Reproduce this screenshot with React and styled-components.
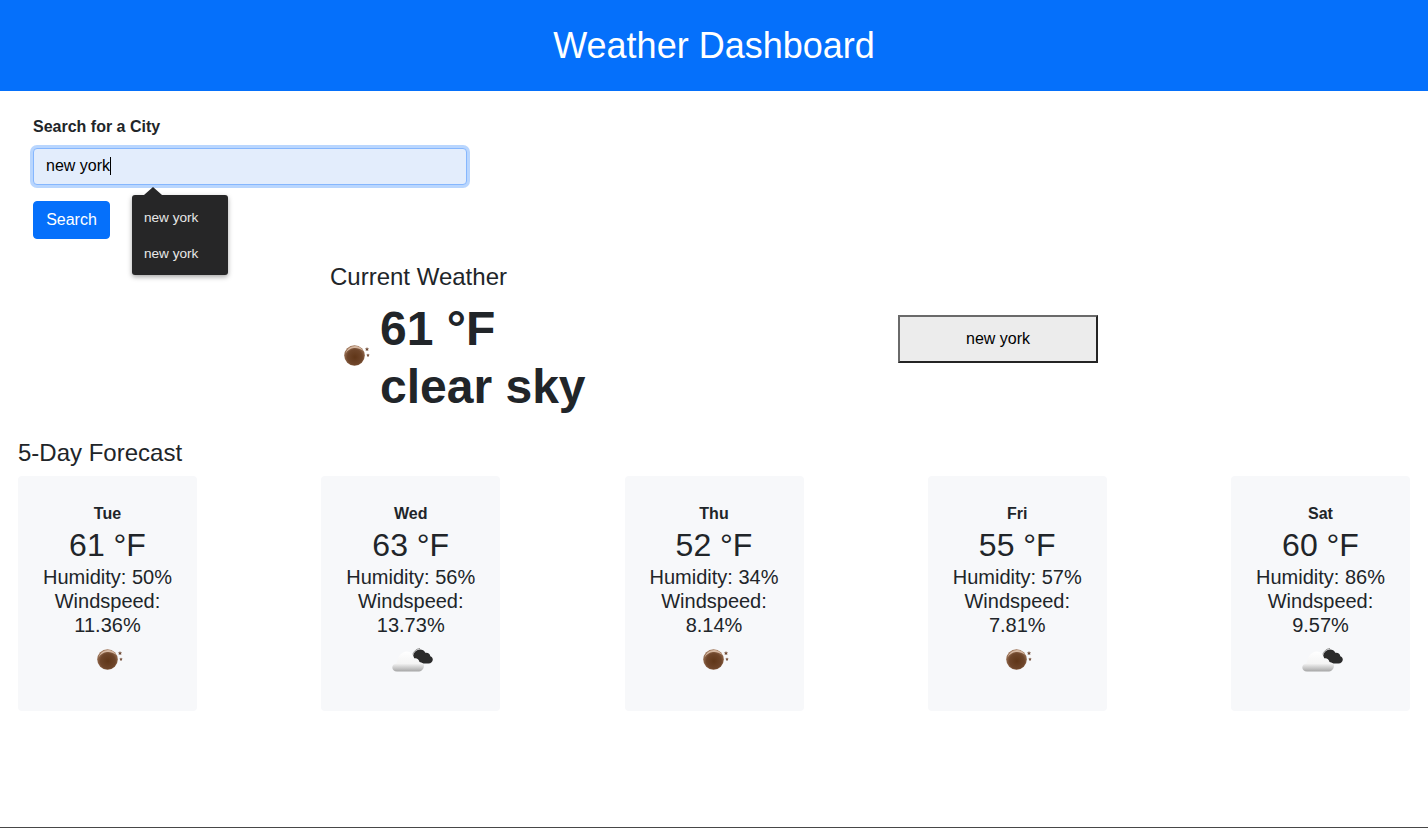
import React from 'react';
import styled, { createGlobalStyle } from 'styled-components';

const GlobalStyle = createGlobalStyle`
    html, body {
        margin: 0;
        padding: 0;
        background: #fff;
        font-family: 'Liberation Sans', Arial, sans-serif;
        color: #212529;
    }
`;

const Page = styled.div`
    display: flex;
    flex-direction: column;
    height: 828px;
    overflow: hidden;
`;

const Header = styled.header`
    height: 91px;
    flex: none;
    display: flex;
    align-items: center;
    justify-content: center;
    background: #0570fb;
`;

const Title = styled.h1`
    margin: 0;
    font-size: 36px;
    font-weight: 400;
    line-height: 1.2;
    color: #fff;
`;

const SearchForm = styled.form`
    padding: 26px 0 0 33px;
    height: 148px;
    box-sizing: border-box;
    flex: none;
`;

const Label = styled.label`
    display: block;
    font-size: 16px;
    font-weight: 700;
    line-height: 19px;
    margin-bottom: 12px;
`;

const InputWrap = styled.div`
    position: relative;
    width: 434px;
`;

const CityInput = styled.div`
    box-sizing: border-box;
    height: 37px;
    padding: 0 12px 2px;
    display: flex;
    align-items: center;
    font-size: 16px;
    color: #000;
    background: #e3edfc;
    border: 1px solid #86b7fe;
    border-radius: 4px;
    box-shadow: 0 0 0 3px #b9d6fe;
`;

const Caret = styled.span`
    display: inline-block;
    width: 1px;
    height: 18px;
    background: #000;
`;

const Suggestions = styled.div`
    position: absolute;
    left: 99px;
    top: 47px;
    width: 96px;
    height: 80px;
    padding: 4px 0;
    box-sizing: border-box;
    background: #262627;
    border-radius: 3px;
    box-shadow: 0 2px 5px rgba(0, 0, 0, 0.35);

    &::before {
        content: '';
        position: absolute;
        left: 12px;
        top: -8px;
        border-left: 9px solid transparent;
        border-right: 9px solid transparent;
        border-bottom: 8px solid #262627;
    }
`;

const Suggestion = styled.div`
    height: 36px;
    padding-left: 12px;
    display: flex;
    align-items: center;
    font-size: 13.6px;
    color: #e8e8e8;
`;

const SearchButton = styled.button`
    display: block;
    margin-top: 16px;
    width: 77px;
    height: 38px;
    padding: 0;
    font: 400 16px 'Liberation Sans', Arial, sans-serif;
    color: #fff;
    background: #0570fb;
    border: 1px solid #0570fb;
    border-radius: 4px;
`;

const CurrentSection = styled.section`
    flex: none;
    height: 199px;
    padding: 23px 0 0 330px;
    box-sizing: border-box;
    display: flex;
    align-items: flex-start;
`;

const CurrentInfo = styled.div`
    width: 568px;
    flex: none;
`;

const Heading = styled.h4`
    margin: 0;
    font-size: 24px;
    font-weight: 400;
    line-height: 29px;
`;

const CurrentBody = styled.div`
    display: flex;
    align-items: center;
    margin-top: 9px;
`;

const Reading = styled.div`
    font-size: 48px;
    font-weight: 700;
    line-height: 58px;
`;

const HistoryButton = styled.button`
    margin-top: 53px;
    width: 200px;
    height: 48px;
    padding: 0;
    font: 400 16px 'Liberation Sans', Arial, sans-serif;
    color: #000;
    background: #ececec;
    border: 2px solid;
    border-color: #6a6a6a #242424 #242424 #6a6a6a;
`;

const ForecastSection = styled.section`
    flex: none;
    padding: 0 18px;
`;

const CardRow = styled.div`
    display: flex;
    justify-content: space-between;
    margin-top: 9px;
`;

const Card = styled.article`
    width: 179px;
    height: 235px;
    box-sizing: border-box;
    padding: 28px 8px 0;
    text-align: center;
    background: #f7f8fa;
    border-radius: 4px;
`;

const Day = styled.div`
    font-size: 16px;
    font-weight: 700;
    line-height: 19px;
`;

const Temp = styled.div`
    font-size: 32px;
    line-height: 38px;
    margin-top: 3px;
    margin-bottom: 1px;
`;

const Detail = styled.div`
    font-size: 20px;
    line-height: 24px;
`;

const CardIcon = styled.div`
    display: flex;
    justify-content: center;
`;

const BottomRule = styled.div`
    margin-top: auto;
    height: 1px;
    flex: none;
    background: #474747;
`;

// the api's "clear sky" night picture, a brown moon with two stars
function MoonIcon({ id }) {
    return (
        <svg width="50" height="50" viewBox="0 0 50 50" aria-hidden="true">
            <defs>
                <radialGradient id={id} cx="52%" cy="58%" r="58%">
                    <stop offset="0%" stopColor="#603618" />
                    <stop offset="62%" stopColor="#6e452a" />
                    <stop offset="100%" stopColor="#a27a5e" />
                </radialGradient>
            </defs>
            <circle cx="24.500" cy="22.500" r="10.300" fill={`url(#${id})`} />
            <path d="M15.500 20.500c1.200-4.500 5-7.500 9.500-7.500 3.500 0 6.500 1.800 8 4.700-3-2.200-6-3-9-2.700-3.500.4-6.500 2.300-8.500 5.500z" fill="#d6b8a2" />
            <path d="M37 14l.6 1.400 1.500.2-1.100 1 .3 1.500-1.300-.8-1.300.8.300-1.500-1.100-1 1.500-.2z" fill="#6f4a35" />
            <path d="M38 20.500l.5 1.100 1.200.2-.9.8.2 1.200-1-.6-1 .6.200-1.200-.9-.8 1.200-.2z" fill="#6f4a35" />
        </svg>
    );
}

// the few clouds picture, a white cloud in front of a dark one
function CloudIcon({ id }) {
    return (
        <svg width="50" height="50" viewBox="0 0 50 50" aria-hidden="true">
            <defs>
                <linearGradient id={id} x1="0" y1="0" x2="0" y2="1">
                    <stop offset="0%" stopColor="#ffffff" />
                    <stop offset="60%" stopColor="#f4f4f4" />
                    <stop offset="100%" stopColor="#a6a6a6" />
                </linearGradient>
            </defs>
            <path d="M27 21c-.4-4.500 3-8.500 7-8.500 2.400 0 4.300 1.200 5.300 3.200 2.900-.4 4.700 1 5 3.500 1.500.4 2.500 1.700 2.500 3.300 0 2.300-1.800 4-4.300 4H33c-2-1.500-4-3.500-6-5.500z" fill="#2b2b2b" />
            <path d="M26.500 20.500c-.2-4.800 3.200-8.800 7.500-9" fill="none" stroke="#969696" strokeWidth="1" />
            <path d="M11 34.500c-2.900 0-4.700-1.700-4.700-4s1.700-3.800 4-4c.2-.4.400-1 .8-1.500.4-5.300 4.600-10.500 9.700-10.500 3.900 0 6.700 3 7.400 6.800 2.500-.5 4.800.8 5.300 3.700 2.700.3 4.500 1.700 4.500 3.600 0 3-2.200 5.900-4.800 5.900H11z" fill={`url(#${id})`} />
        </svg>
    );
}

const forecast = [
    { day: 'Tue', temp: 61, humidity: 50, wind: '11.36', icon: 'moon' },
    { day: 'Wed', temp: 63, humidity: 56, wind: '13.73', icon: 'cloud' },
    { day: 'Thu', temp: 52, humidity: 34, wind: '8.14', icon: 'moon' },
    { day: 'Fri', temp: 55, humidity: 57, wind: '7.81', icon: 'moon' },
    { day: 'Sat', temp: 60, humidity: 86, wind: '9.57', icon: 'cloud' },
];

function App() {
    return (
        <Page>
            <GlobalStyle />
            <Header>
                <Title>Weather Dashboard</Title>
            </Header>

            <SearchForm onSubmit={(e) => e.preventDefault()}>
                <Label>Search for a City</Label>
                <InputWrap>
                    <CityInput>new york<Caret /></CityInput>
                    <Suggestions>
                        <Suggestion>new york</Suggestion>
                        <Suggestion>new york</Suggestion>
                    </Suggestions>
                </InputWrap>
                <SearchButton type="submit">Search</SearchButton>
            </SearchForm>

            <CurrentSection>
                <CurrentInfo>
                    <Heading>Current Weather</Heading>
                    <CurrentBody>
                        <MoonIcon id="moon-current" />
                        <Reading>61 °F<br />clear sky</Reading>
                    </CurrentBody>
                </CurrentInfo>
                <HistoryButton type="button">new york</HistoryButton>
            </CurrentSection>

            <ForecastSection>
                <Heading>5-Day Forecast</Heading>
                <CardRow>
                    {forecast.map((f) => (
                        <Card key={f.day}>
                            <Day>{f.day}</Day>
                            <Temp>{f.temp} °F</Temp>
                            <Detail>Humidity: {f.humidity}%</Detail>
                            <Detail>Windspeed: {f.wind}%</Detail>
                            <CardIcon>
                                {f.icon === 'moon'
                                    ? <MoonIcon id={`moon-${f.day}`} />
                                    : <CloudIcon id={`cloud-${f.day}`} />}
                            </CardIcon>
                        </Card>
                    ))}
                </CardRow>
            </ForecastSection>

            <BottomRule />
        </Page>
    );
}

export default App;
